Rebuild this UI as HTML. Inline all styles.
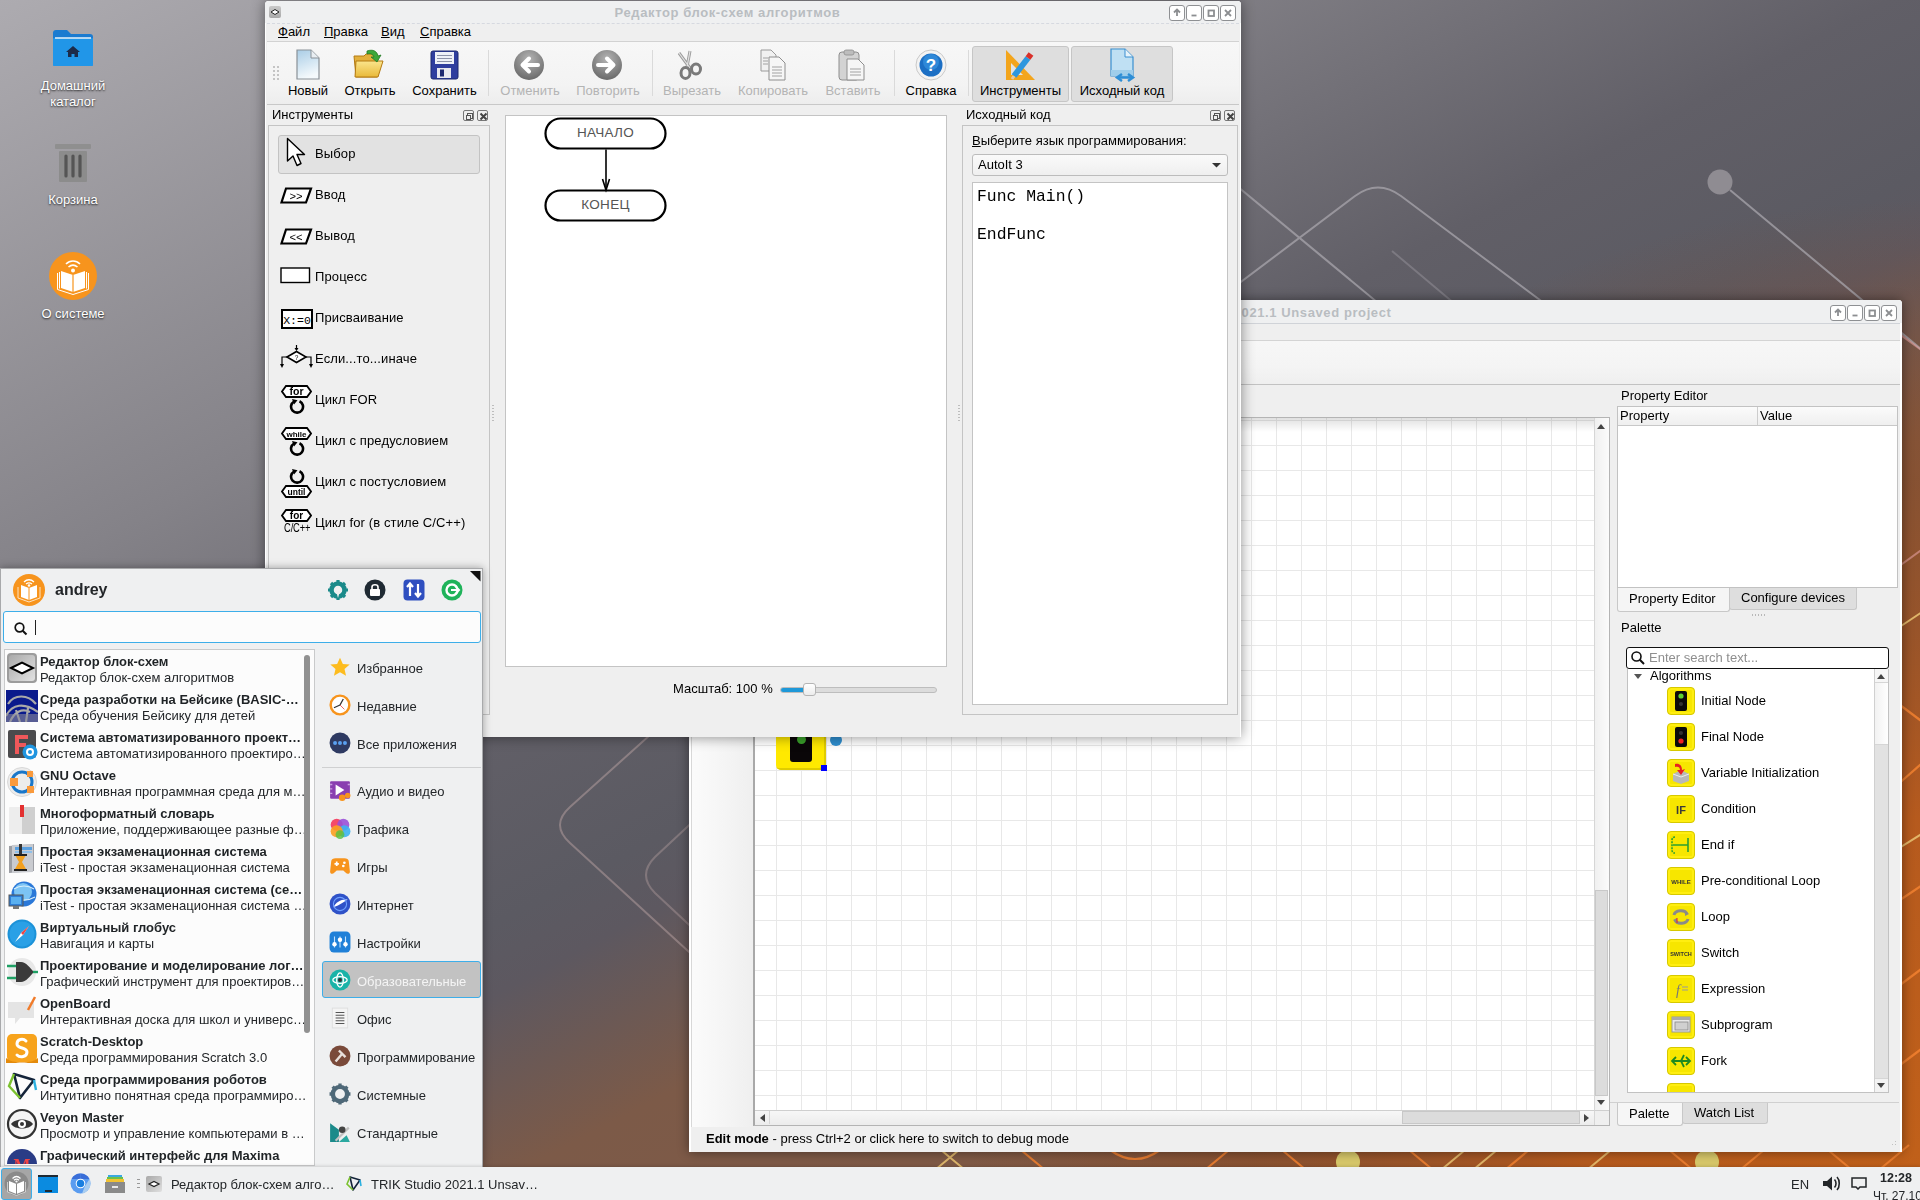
<!DOCTYPE html>
<html><head><meta charset="utf-8">
<style>
*{box-sizing:border-box;margin:0;padding:0}
html,body{width:1920px;height:1200px;overflow:hidden}
body{position:relative;font-family:"Liberation Sans",sans-serif;font-size:13px;color:#000;
background:linear-gradient(172deg,#85838a 0%,#7c7a80 30%,#6a676d 52%,#6d5f5d 65%,#7a5a48 80%,#9a5428 100%)}
.abs{position:absolute}
svg{display:block}
#bg{position:absolute;left:0;top:0;width:1920px;height:1200px}
.dicon{position:absolute;width:110px;text-align:center;color:#fff;font-size:13px;line-height:16px;text-shadow:0 1px 2px rgba(0,0,0,.8)}
.win{position:absolute;background:#efefef;box-shadow:0 0 14px rgba(0,0,0,.45);border-radius:4px 4px 0 0}
.title{position:absolute;left:0;top:0;right:0;height:23px;background:#eff0f1;border-radius:4px 4px 0 0}
.ttext{position:absolute;top:4px;left:0;right:0;text-align:center;font-weight:bold;color:#b9bdc1;font-size:13px}
.tbtn{position:absolute;top:4px;width:16px;height:16px;border:1px solid #8e9093;border-radius:3px;background:#fff}
.menu{font-size:13px;line-height:16px}
.sep{top:49px;width:1px;height:46px;background:#dadada}
.chk{top:45px;height:56px;border:1px solid #c6c6c6;border-radius:3px;background:#dedede}
.tbl{top:82px;text-align:center;font-size:13px;line-height:16px}
.dis{color:#b4b4b4}
.dbtn{width:11px;height:11px;border:1px solid #777;border-radius:2px}
.yic{width:28px;height:28px;background:#f7e600;border:1px solid #d6c800;border-radius:4px;box-shadow:inset 0 0 0 2px #ffee10}
.mname{font-size:13px;font-weight:bold;line-height:16px;color:#1f2326;white-space:nowrap}
.mdesc{font-size:13px;line-height:16px;color:#232629;white-space:nowrap}
.mcat{font-size:13px;line-height:16px;color:#232629}
.tool{font-size:13px;line-height:16px;letter-spacing:0.12px}
#taskbar{position:absolute;left:0;top:1167px;width:1920px;height:33px;background:#eff0f1}
</style></head><body>
<svg id="bg" width="1920" height="1200" viewBox="0 0 1920 1200">
  <defs>
    <linearGradient id="bgv" x1="0" y1="0" x2="976" y2="1854" gradientUnits="userSpaceOnUse">
      <stop offset="0" stop-color="#adabb0"/>
      <stop offset="0.25" stop-color="#848288"/>
      <stop offset="0.42" stop-color="#615f67"/>
      <stop offset="0.50" stop-color="#5b5a62"/>
      <stop offset="0.53" stop-color="#5d5860"/>
      <stop offset="0.61" stop-color="#7c5a48"/>
      <stop offset="1" stop-color="#8a5a40"/>
    </linearGradient>
    <radialGradient id="tl" cx="0" cy="0" r="10" gradientUnits="userSpaceOnUse">
      <stop offset="0" stop-color="#c8c6cc" stop-opacity="0"/>
      <stop offset="1" stop-color="#c8c6cc" stop-opacity="0"/>
    </radialGradient>
    <radialGradient id="orng" cx="1920" cy="1150" r="950" gradientUnits="userSpaceOnUse">
      <stop offset="0" stop-color="#c0601a" stop-opacity="1"/>
      <stop offset="0.35" stop-color="#b85a1c" stop-opacity="0.95"/>
      <stop offset="0.7" stop-color="#8e4c24" stop-opacity="0.6"/>
      <stop offset="1" stop-color="#8a4a28" stop-opacity="0"/>
    </radialGradient>
  </defs>
  <rect width="1920" height="1200" fill="url(#bgv)"/>
  <rect width="1920" height="1200" fill="url(#tl)"/>
  <rect width="1920" height="1200" fill="url(#orng)"/>
  <g fill="none" stroke="#a9a6ad" stroke-width="2" opacity="0.75">
    <path d="M1100 388 L1355 196 Q1378 179 1401 196 L1700 420"/>
    <path d="M1150 114 L1500 404"/>
    <path d="M1392 251 L1600 426" opacity="0.5"/>
    <path d="M1730 190 L1970 390"/>
  </g>
  <g fill="none" stroke="#b9a2a2" stroke-width="2" opacity="0.5">
    <path d="M700 690 L570 807 Q550 825 570 843 L700 962"/>
    <path d="M700 815 L655 857 Q637 875 655 893 L700 935" opacity="0.8"/>
  </g>
  <circle cx="1720" cy="182" r="12.5" fill="#8f8c92"/>
  <g fill="none" stroke="#e4a0a0" stroke-width="2" opacity="0.6">
    <path d="M1880 320 L1990 400"/>
    <path d="M1880 580 L1990 500"/>
  </g>
  <g fill="none" stroke="#f08030" stroke-width="2.2" opacity="0.9">
    <path d="M1880 690 L1960 750"/>
    <path d="M1880 800 L1960 730"/>
    <path d="M1900 900 L1960 860"/>
    <path d="M1880 1000 L1960 940"/>
    <path d="M1880 1080 L1960 1020"/>
    <path d="M1015 1145 L1045 1170"/>
    <path d="M1110 1150 Q1135 1168 1160 1150"/>
    <path d="M1235 1145 L1205 1170"/>
    <path d="M1276 1145 L1306 1170"/>
    <path d="M1403 1145 L1433 1170"/>
    <path d="M1535 1145 L1505 1170"/>
    <path d="M1663 1145 L1693 1170"/>
    <path d="M1770 1145 L1740 1170"/>
    <path d="M1822 1145 L1852 1170"/>
    <path d="M1909 1145 L1879 1170"/>
  </g>
  <g fill="none" stroke="#e8c070" stroke-width="2" opacity="0.9">
    <path d="M935 1145 L965 1170 M965 1145 L935 1170"/>
    <path d="M1471 1145 L1441 1170"/>
    <path d="M1503 1145 L1473 1170"/>
    <path d="M1617 1145 L1587 1170"/>
    <path d="M1880 640 L1940 600"/>
    <path d="M1880 860 L1960 810"/>
  </g>
  <circle cx="1348" cy="1162" r="12" fill="#d8c86a"/>
  <circle cx="1707" cy="1162" r="12" fill="#d8c86a"/>
</svg>
<svg class="abs" style="left:52px;top:29px" width="42" height="38">
  <path d="M1 4Q1 1 4 1H15L19 5H38Q41 5 41 8V35Q41 37 39 37H3Q1 37 1 35Z" fill="#1b7bd0"/>
  <rect x="1" y="9" width="40" height="28" rx="1" fill="#2196e8"/>
  <path d="M3 9H39" stroke="#e8f2fa" stroke-width="1.5"/>
  <path d="M21 17L14 23H16V28H19.5V25H22.5V28H26V23H28Z" fill="#1c2b4a"/>
</svg>
<div class="dicon" style="left:18px;top:78px">Домашний<br>каталог</div>
<svg class="abs" style="left:55px;top:143px" width="36" height="40">
  <rect x="0" y="1" width="36" height="5" rx="1" fill="#8f8f8f"/>
  <rect x="4" y="8" width="28" height="31" rx="1" fill="#8c8c8c"/>
  <path d="M11 13V33M18 13V33M25 13V33" stroke="#555" stroke-width="3.2" stroke-linecap="round"/>
</svg>
<div class="dicon" style="left:18px;top:192px">Корзина</div>
<svg class="abs" style="left:49px;top:252px" width="48" height="48">
  <circle cx="24" cy="24" r="24" fill="#f7941d"/>
  <path d="M12 19L24 23L36 19V36L24 40L12 36Z" fill="#fff"/>
  <path d="M24 23V40" stroke="#f7941d" stroke-width="1.2"/>
  <path d="M8.5 21V37.5L24 42.5L39.5 37.5V21" fill="none" stroke="#fff" stroke-width="1"/>
  <path d="M10.5 20V36.5M37.5 20V36.5" stroke="#fff" stroke-width="1"/>
  <path d="M17 12C21 8 27 8 31 12M19.5 15C22.5 12.5 25.5 12.5 28.5 15" stroke="#fff" stroke-width="1.6" fill="none"/>
  <circle cx="24" cy="18.5" r="2" fill="#fff"/>
</svg>
<div class="dicon" style="left:18px;top:306px">О системе</div>
<div class="win" id="trik" style="left:689px;top:300px;width:1213px;height:852px;box-shadow:inset 2px 1px 0 #fff,inset -2px 0 0 #fff,0 0 12px rgba(0,0,0,.45)">
  <div class="title" style="height:23px">
    <div class="ttext" style="top:5px;left:20px;right:71px;letter-spacing:0.6px">TRIK Studio 2021.1 Unsaved project</div>
    <div class="tbtn" style="left:1141px;top:5px"><svg width="14" height="14"><path d="M7 3.5V10 M4 6.5L7 3.5L10 6.5" stroke="#8c8e91" stroke-width="1.8" fill="none"/></svg></div>
    <div class="tbtn" style="left:1158px;top:5px"><svg width="14" height="14"><path d="M4.5 9.5H9.5" stroke="#8c8e91" stroke-width="1.8"/></svg></div>
    <div class="tbtn" style="left:1175px;top:5px"><svg width="14" height="14"><rect x="4.5" y="4.5" width="5.5" height="5.5" stroke="#8c8e91" stroke-width="1.8" fill="none"/></svg></div>
    <div class="tbtn" style="left:1192px;top:5px"><svg width="14" height="14"><path d="M4 4L10 10M10 4L4 10" stroke="#8c8e91" stroke-width="1.8"/></svg></div>
  </div>
  <div class="abs" style="left:2px;top:23px;right:2px;height:18px;background:#efefef;border-top:1px solid #d0d3d8;border-bottom:1px solid #d4d4d4"></div>
  <div class="abs" style="left:2px;top:41px;right:2px;height:44px;background:linear-gradient(#f7f7f7,#f4f4f4 60%,#efefef);border-bottom:1px solid #c2c2c2"></div>
  <!-- left column -->
  <div class="abs" style="left:2px;top:118px;width:62px;height:709px;background:linear-gradient(90deg,#fbfbfb,#f4f4f4 60%,#efefef);border-left:1px solid #d8d8d8"></div>
  <!-- canvas frame -->
  <div class="abs" style="left:64px;top:117px;width:857px;height:709px;border:1px solid #b4b4b4;border-left:2px solid #a9a9a9"></div>
  <div class="abs" style="left:66px;top:118px;width:839px;height:692px;background-color:#fff;
     background-image:linear-gradient(90deg,#e8e8e8 1px,transparent 1px),linear-gradient(#e8e8e8 1px,transparent 1px);
     background-size:25px 25px;background-position:21px 27px"></div>
  <!-- shadow from flowchart window onto canvas -->
  <div class="abs" style="left:66px;top:118px;width:839px;height:14px;background:linear-gradient(rgba(0,0,0,.12),rgba(0,0,0,0))"></div>
  <!-- yellow node -->
  <div class="abs" style="left:87px;top:420px;width:50px;height:50px;background:#ffe900;border-radius:5px;box-shadow:inset -2px -2px 0 #e0cc00"></div>
  <div class="abs" style="left:101px;top:420px;width:22px;height:42px;background:#0a0608;border-radius:3px"></div>
  <div class="abs" style="left:108px;top:435px;width:9px;height:9px;background:#3aa02a;border-radius:50%"></div>
  <div class="abs" style="left:141px;top:434px;width:12px;height:12px;background:#2f8fd0;border-radius:50%"></div>
  <div class="abs" style="left:132px;top:465px;width:6px;height:6px;background:#0000ff"></div>
  <!-- v scrollbar -->
  <div class="abs" style="left:905px;top:118px;width:15px;height:692px;background:linear-gradient(90deg,#f0f0f0,#fbfbfb);border-left:1px solid #d6d6d6"></div>
  <svg class="abs" style="left:907px;top:123px" width="10" height="8"><path d="M1 6H9L5 1Z" fill="#444"/></svg>
  <div class="abs" style="left:906px;top:590px;width:13px;height:206px;background:#dcdcdc;border:1px solid #c8c8c8"></div>
  <svg class="abs" style="left:907px;top:799px" width="10" height="8"><path d="M1 1H9L5 6Z" fill="#444"/></svg>
  <!-- h scrollbar -->
  <div class="abs" style="left:66px;top:810px;width:839px;height:15px;background:linear-gradient(#f7f7f7,#ececec);border-top:1px solid #cfcfcf"></div>
  <svg class="abs" style="left:70px;top:813px" width="8" height="10"><path d="M6 1V9L1 5Z" fill="#444"/></svg>
  <div class="abs" style="left:80px;top:811px;width:1px;height:13px;background:#d6d6d6"></div>
  <div class="abs" style="left:713px;top:811px;width:178px;height:13px;background:#dcdcdc;border:1px solid #c8c8c8"></div>
  <svg class="abs" style="left:894px;top:813px" width="8" height="10"><path d="M1 1V9L6 5Z" fill="#444"/></svg>
  <div class="abs" style="left:905px;top:810px;width:15px;height:15px;background:#efefef;border-top:1px solid #cfcfcf;border-left:1px solid #d6d6d6"></div>
  <!-- status -->
  <div class="abs" style="left:17px;top:831px;font-size:13px;line-height:16px"><b>Edit mode</b> - press Ctrl+2 or click here to switch to debug mode</div>
  <!-- right dock -->
  <div class="abs" style="left:932px;top:88px;font-size:13px;line-height:16px">Property Editor</div>
  <div class="abs" style="left:928px;top:106px;width:281px;height:182px;background:#fff;border:1px solid #c2c2c2"></div>
  <div class="abs" style="left:929px;top:107px;width:279px;height:19px;background:linear-gradient(#fbfbfb,#efefef);border-bottom:1px solid #c8c8c8"></div>
  <div class="abs" style="left:1068px;top:107px;width:1px;height:18px;background:#cdcdcd"></div>
  <div class="abs" style="left:931px;top:108px;font-size:13px;line-height:16px">Property</div>
  <div class="abs" style="left:1071px;top:108px;font-size:13px;line-height:16px">Value</div>
  <div class="abs" style="left:928px;top:288px;width:113px;height:24px;background:#f5f5f5;border:1px solid #c8c8c8;border-top:none;border-radius:0 0 3px 3px"></div>
  <div class="abs" style="left:1040px;top:288px;width:128px;height:22px;background:#dedede;border:1px solid #c8c8c8;border-top:none;border-radius:0 0 3px 3px"></div>
  <div class="abs" style="left:940px;top:291px;font-size:13px;line-height:16px">Property Editor</div>
  <div class="abs" style="left:1052px;top:290px;font-size:13px;line-height:16px">Configure devices</div>
  <div class="abs" style="left:1062px;top:314px;width:16px;height:2px;background:radial-gradient(circle,#b8b8b8 0.6px,transparent 0.9px) 0 0/3px 2px"></div>
  <div class="abs" style="left:932px;top:320px;font-size:13px;line-height:16px">Palette</div>
  <div class="abs" style="left:937px;top:347px;width:263px;height:22px;background:#fff;border:1.5px solid #111;border-radius:3px"></div>
  <svg class="abs" style="left:941px;top:350px" width="16" height="16"><circle cx="6.5" cy="6.5" r="4.5" fill="none" stroke="#111" stroke-width="1.6"/><path d="M9.8 9.8L14 14" stroke="#111" stroke-width="2"/></svg>
  <div class="abs" style="left:960px;top:350px;font-size:13px;line-height:16px;color:#8f8f8f">Enter search text...</div>
  <div class="abs" style="left:938px;top:369px;width:262px;height:424px;background:#fff;border:1px solid #c2c2c2;border-top:none;overflow:hidden">
  </div>
  <svg class="abs" style="left:944px;top:373px" width="10" height="8"><path d="M1 1H9L5 6Z" fill="#555"/></svg>
  <div class="abs" style="left:961px;top:368px;font-size:13px;line-height:16px">Algorithms</div>
  <div class="abs" style="left:0;top:0;width:1212px;height:792px;overflow:hidden;pointer-events:none">
<div class="abs yic" style="left:978px;top:387px"></div>
<svg class="abs" style="left:978px;top:387px" width="28" height="28"><rect x="8" y="4" width="12" height="20" rx="2" fill="#0a0a0a"/><circle cx="14" cy="9" r="2.6" fill="#5cd030"/><circle cx="14" cy="17" r="2" fill="#333"/></svg>
<div class="abs" style="left:1012px;top:393px;font-size:13px;line-height:16px">Initial Node</div>
<div class="abs yic" style="left:978px;top:423px"></div>
<svg class="abs" style="left:978px;top:423px" width="28" height="28"><rect x="8" y="4" width="12" height="20" rx="2" fill="#0a0a0a"/><circle cx="14" cy="10" r="2" fill="#333"/><circle cx="14" cy="18" r="2.6" fill="#f02020"/></svg>
<div class="abs" style="left:1012px;top:429px;font-size:13px;line-height:16px">Final Node</div>
<div class="abs yic" style="left:978px;top:459px"></div>
<svg class="abs" style="left:978px;top:459px" width="28" height="28"><path d="M6 15L14 11L22 15V22L14 25L6 22Z" fill="#b8b8b8"/><path d="M6 15L14 18L22 15" fill="none" stroke="#eee" stroke-width="1"/><path d="M8 5C12 4 15 6 15 11L18 10L14 16L10 11L13 11C13 8 11 7 8 8Z" fill="#e82020"/></svg>
<div class="abs" style="left:1012px;top:465px;font-size:13px;line-height:16px">Variable Initialization</div>
<div class="abs yic" style="left:978px;top:495px"></div>
<svg class="abs" style="left:978px;top:495px" width="28" height="28"><text x="14" y="19" text-anchor="middle" font-family="Liberation Sans" font-weight="bold" font-size="11" fill="#3a3a3a">IF</text></svg>
<div class="abs" style="left:1012px;top:501px;font-size:13px;line-height:16px">Condition</div>
<div class="abs yic" style="left:978px;top:531px"></div>
<svg class="abs" style="left:978px;top:531px" width="28" height="28"><path d="M8 6C5 6 5 8 5 10V18C5 20 5 22 8 22" fill="none" stroke="#2aa030" stroke-width="1.6" stroke-dasharray="2 1"/><path d="M6 14H21M21 7V21" stroke="#2aa030" stroke-width="1.6"/></svg>
<div class="abs" style="left:1012px;top:537px;font-size:13px;line-height:16px">End if</div>
<div class="abs yic" style="left:978px;top:567px"></div>
<svg class="abs" style="left:978px;top:567px" width="28" height="28"><text x="14" y="17" text-anchor="middle" font-family="Liberation Sans" font-weight="bold" font-size="6" fill="#333">WHILE</text></svg>
<div class="abs" style="left:1012px;top:573px;font-size:13px;line-height:16px">Pre-conditional Loop</div>
<div class="abs yic" style="left:978px;top:603px"></div>
<svg class="abs" style="left:978px;top:603px" width="28" height="28"><path d="M7 12C8 7 18 6 20 11M21 16C20 21 10 22 8 17" fill="none" stroke="#8a8a8a" stroke-width="3"/><path d="M18 8L22 11L18 13Z M10 15L6 17L10 20Z" fill="#8a8a8a"/><path d="M10 15V20" stroke="#e22" stroke-width="1"/></svg>
<div class="abs" style="left:1012px;top:609px;font-size:13px;line-height:16px">Loop</div>
<div class="abs yic" style="left:978px;top:639px"></div>
<svg class="abs" style="left:978px;top:639px" width="28" height="28"><text x="14" y="17" text-anchor="middle" font-family="Liberation Sans" font-weight="bold" font-size="5.5" fill="#333">SWITCH</text></svg>
<div class="abs" style="left:1012px;top:645px;font-size:13px;line-height:16px">Switch</div>
<div class="abs yic" style="left:978px;top:675px"></div>
<svg class="abs" style="left:978px;top:675px" width="28" height="28"><text x="11" y="20" text-anchor="middle" font-family="Liberation Serif" font-style="italic" font-size="14" fill="#777">f</text><path d="M15 12H21M15 15H21" stroke="#999" stroke-width="1.2"/></svg>
<div class="abs" style="left:1012px;top:681px;font-size:13px;line-height:16px">Expression</div>
<div class="abs yic" style="left:978px;top:711px"></div>
<svg class="abs" style="left:978px;top:711px" width="28" height="28"><rect x="5" y="6" width="18" height="15" fill="#e8e8e8" stroke="#999" stroke-width="1"/><rect x="5" y="6" width="18" height="3" fill="#aaa"/><rect x="8" y="11" width="13" height="8" fill="#d0d0d0" stroke="#888" stroke-width="0.8"/></svg>
<div class="abs" style="left:1012px;top:717px;font-size:13px;line-height:16px">Subprogram</div>
<div class="abs yic" style="left:978px;top:747px"></div>
<svg class="abs" style="left:978px;top:747px" width="28" height="28"><path d="M5 14H23M9 10L5 14L9 18M19 10L23 14L19 18M14 14L17 8M14 14L17 20" fill="none" stroke="#1f8a1f" stroke-width="1.8"/></svg>
<div class="abs" style="left:1012px;top:753px;font-size:13px;line-height:16px">Fork</div>
<div class="abs yic" style="left:978px;top:783px"></div>
<svg class="abs" style="left:978px;top:783px" width="28" height="28"><path d="M6 14H22" stroke="#1f8a1f" stroke-width="1.8"/></svg>
  </div>
  <!-- palette scrollbar -->
  <div class="abs" style="left:1185px;top:369px;width:14px;height:423px;background:#e2e2e2;border-left:1px solid #d0d0d0"></div>
  <div class="abs" style="left:1186px;top:369px;width:13px;height:14px;background:#f6f6f6;border-bottom:1px solid #d6d6d6"></div>
  <svg class="abs" style="left:1187px;top:373px" width="10" height="8"><path d="M1 6H9L5 1Z" fill="#444"/></svg>
  <div class="abs" style="left:1186px;top:383px;width:13px;height:62px;background:linear-gradient(90deg,#f2f2f2,#fff);border-bottom:1px solid #d6d6d6"></div>
  <div class="abs" style="left:1186px;top:778px;width:13px;height:14px;background:#f3f3f3;border-top:1px solid #d6d6d6"></div>
  <svg class="abs" style="left:1187px;top:782px" width="10" height="8"><path d="M1 1H9L5 6Z" fill="#444"/></svg>
  <!-- palette tabs -->
  <div class="abs" style="left:928px;top:802px;width:66px;height:24px;background:#f6f6f6;border:1px solid #c8c8c8;border-top:none;border-radius:0 0 3px 3px"></div>
  <div class="abs" style="left:993px;top:802px;width:86px;height:22px;background:#dedede;border:1px solid #c8c8c8;border-top:none;border-radius:0 0 3px 3px"></div>
  <div class="abs" style="left:940px;top:806px;font-size:13px;line-height:16px">Palette</div>
  <div class="abs" style="left:1005px;top:805px;font-size:13px;line-height:16px">Watch List</div>
  <div class="abs" style="left:921px;top:802px;width:289px;height:1px;background:#d0d0d0"></div>
  <div class="abs" style="left:1199px;top:837px;width:10px;height:10px;background:radial-gradient(circle,#c0c0c0 0.7px,transparent 1px) 0 0/3px 3px;clip-path:polygon(100% 0,100% 100%,0 100%)"></div>
</div>
<!-- Flowchart window -->
<div class="win" id="fc" style="left:265px;top:1px;width:976px;height:736px;box-shadow:inset 1px 1px 0 #fff,inset -1px 0 0 #fff,0 0 14px rgba(0,0,0,.45)">
  <div class="title" style="height:22px">
    <div class="abs" style="left:4px;top:5px;width:12px;height:12px;border-radius:2px;background:linear-gradient(#c9c9c9,#a9a9a9)">
      <svg width="12" height="12" style="position:absolute;left:0;top:0"><path d="M2 6 L6 3.5 L10 6 L6 8.5Z" fill="#fff" stroke="#222" stroke-width="1"/></svg>
    </div>
    <div class="ttext" style="top:4px;left:20px;right:71px;letter-spacing:0.6px">Редактор блок-схем алгоритмов</div>
    <div class="tbtn" style="left:904px"><svg width="14" height="14"><path d="M7 3.5V10 M4 6.5L7 3.5L10 6.5" stroke="#8c8e91" stroke-width="1.8" fill="none"/></svg></div>
    <div class="tbtn" style="left:921px"><svg width="14" height="14"><path d="M4.5 9.5H9.5" stroke="#8c8e91" stroke-width="1.8"/></svg></div>
    <div class="tbtn" style="left:938px"><svg width="14" height="14"><rect x="4.5" y="4.5" width="5.5" height="5.5" stroke="#8c8e91" stroke-width="1.8" fill="none"/></svg></div>
    <div class="tbtn" style="left:955px"><svg width="14" height="14"><path d="M4 4L10 10M10 4L4 10" stroke="#8c8e91" stroke-width="1.8"/></svg></div>
  </div>
  <!-- menu bar -->
  <div class="abs" style="left:2px;top:22px;right:2px;height:19px;background:#efefef;border-top:1px dashed #d6d9e0;border-bottom:1px solid #d2d2d2"></div>
  <div class="abs menu" style="left:13px;top:23px"><u>Ф</u>айл</div>
  <div class="abs menu" style="left:59px;top:23px"><u>П</u>равка</div>
  <div class="abs menu" style="left:116px;top:23px"><u>В</u>ид</div>
  <div class="abs menu" style="left:155px;top:23px"><u>С</u>правка</div>
  <!-- toolbar -->
  <div class="abs" style="left:2px;top:41px;right:2px;height:63px;background:linear-gradient(#f7f7f7,#f3f3f3 70%,#ededed);border-bottom:1px solid #c8c8c8"></div>
  <div class="abs" style="left:7px;top:64px;width:7px;height:17px;background:radial-gradient(circle,#c4c4c4 0.8px,transparent 1.1px) 0 0/4px 4px"></div>
  <div class="abs sep" style="left:223px"></div>
  <div class="abs sep" style="left:387px"></div>
  <div class="abs sep" style="left:629px"></div>
  <div class="abs sep" style="left:703px"></div>
  <div class="abs chk" style="left:707px;width:97px"></div>
  <div class="abs chk" style="left:806px;width:102px"></div>
  <div class="abs tbl" style="left:13px;width:60px">Новый</div>
  <div class="abs tbl" style="left:75px;width:60px">Открыть</div>
  <div class="abs tbl" style="left:142px;width:75px">Сохранить</div>
  <div class="abs tbl dis" style="left:230px;width:70px">Отменить</div>
  <div class="abs tbl dis" style="left:303px;width:80px">Повторить</div>
  <div class="abs tbl dis" style="left:392px;width:70px">Вырезать</div>
  <div class="abs tbl dis" style="left:468px;width:80px">Копировать</div>
  <div class="abs tbl dis" style="left:553px;width:70px">Вставить</div>
  <div class="abs tbl" style="left:631px;width:70px">Справка</div>
  <div class="abs tbl" style="left:707px;width:97px">Инструменты</div>
  <div class="abs tbl" style="left:806px;width:102px">Исходный код</div>
  
  <svg class="abs" style="left:27px;top:47px" width="32" height="34">
    <defs><linearGradient id="gnew" x1="0" y1="0" x2="0.3" y2="1"><stop offset="0" stop-color="#a9cde6"/><stop offset="1" stop-color="#f4f9fc"/></linearGradient></defs>
    <path d="M5 2H19L27 10V31H5Z" fill="url(#gnew)" stroke="#8a9197" stroke-width="1.2"/>
    <path d="M19 2V10H27" fill="#e9eef2" stroke="#8a9197" stroke-width="1"/>
  </svg>
  <svg class="abs" style="left:88px;top:47px" width="34" height="34">
    <defs><linearGradient id="gfold" x1="0" y1="0" x2="0" y2="1"><stop offset="0" stop-color="#fbe58c"/><stop offset="1" stop-color="#e9b93a"/></linearGradient></defs>
    <path d="M1 8H11L13 6H24V29H3Z" fill="#e3b03c" stroke="#b47a12" stroke-width="1"/>
    <path d="M3 13H30L25 29H2Z" fill="url(#gfold)" stroke="#b47a12" stroke-width="1"/>
    <path d="M14 3C20 1 24 3 25 8L28 7L24 14L18 9L21 9C20 6 17 5 14 6Z" fill="#3ca83a" stroke="#237a24" stroke-width="0.8"/>
  </svg>
  <svg class="abs" style="left:163px;top:48px" width="32" height="32">
    <rect x="3" y="2" width="27" height="28" rx="2" fill="#2f3e9e" stroke="#1d286e" stroke-width="1"/>
    <rect x="7" y="3" width="19" height="12" fill="#eef1f7"/>
    <path d="M9 6.5H24M9 9.5H24M9 12.5H24" stroke="#8d93a8" stroke-width="1"/>
    <rect x="9" y="19" width="14" height="10" fill="#e8e8ee"/>
    <rect x="12" y="20.5" width="4" height="7" fill="#1d286e"/>
  </svg>
  <svg class="abs" style="left:248px;top:48px" width="32" height="32">
    <defs><radialGradient id="garr" cx="0.5" cy="0.3" r="0.7"><stop offset="0" stop-color="#b4b4b4"/><stop offset="1" stop-color="#6a6a6a"/></radialGradient></defs>
    <circle cx="16" cy="16" r="15" fill="url(#garr)"/>
    <path d="M25 16H10M16 9.5L9.5 16L16 22.5" stroke="#fff" stroke-width="4" fill="none" stroke-linecap="round" stroke-linejoin="round"/>
  </svg>
  <svg class="abs" style="left:326px;top:48px" width="32" height="32">
    <circle cx="16" cy="16" r="15" fill="url(#garr)"/>
    <path d="M7 16H22M16 9.5L22.5 16L16 22.5" stroke="#fff" stroke-width="4" fill="none" stroke-linecap="round" stroke-linejoin="round"/>
  </svg>
  <svg class="abs" style="left:411px;top:48px" width="32" height="32">
    <path d="M3 4L14 19M14 2L11 18" stroke="#9b9b9b" stroke-width="3" fill="none"/>
    <path d="M3 4L14 19M14 2L11 18" stroke="#e2e2e2" stroke-width="1.2" fill="none"/>
    <ellipse cx="9.5" cy="24" rx="4.5" ry="5.5" fill="none" stroke="#7a7a7a" stroke-width="3"/>
    <ellipse cx="20" cy="20" rx="4.5" ry="5" fill="none" stroke="#7a7a7a" stroke-width="3"/>
  </svg>
  <svg class="abs" style="left:492px;top:48px" width="32" height="32">
    <path d="M4 1H14L19 6V22H4Z" fill="#f1f1f1" stroke="#9a9a9a" stroke-width="1"/>
    <path d="M12 8H22L28 14V31H12Z" fill="#f6f6f6" stroke="#8e8e8e" stroke-width="1"/>
    <path d="M6 9H11M6 12H11M6 15H11M15 18H25M15 21H25M15 24H25M15 27H25" stroke="#999" stroke-width="0.9"/>
  </svg>
  <svg class="abs" style="left:572px;top:48px" width="32" height="32">
    <rect x="2" y="3" width="20" height="28" rx="3" fill="#d3d3d3" stroke="#8e8e8e" stroke-width="1"/>
    <rect x="7" y="1" width="10" height="5" rx="2" fill="#bdbdbd" stroke="#8e8e8e" stroke-width="0.8"/>
    <path d="M10 10H21L27 16V31H10Z" fill="#f6f6f6" stroke="#8e8e8e" stroke-width="1"/>
    <path d="M13 20H24M13 23H24M13 26H24" stroke="#999" stroke-width="0.9"/>
  </svg>
  <svg class="abs" style="left:650px;top:48px" width="32" height="32">
    <circle cx="16" cy="16" r="15" fill="#f3f3f3" stroke="#c9c9c9" stroke-width="1"/>
    <circle cx="16" cy="16" r="11.5" fill="#1c6fc4"/>
    <circle cx="16" cy="13" r="8" fill="#3b9ae6" opacity="0.6"/>
    <text x="16" y="22" text-anchor="middle" font-family="Liberation Sans" font-weight="bold" font-size="17" fill="#fff">?</text>
  </svg>
  <svg class="abs" style="left:739px;top:48px" width="32" height="32">
    <path d="M2 1L2 31L31 31Z" fill="#f3a51c"/>
    <path d="M7 14L7 26L19 26Z" fill="#e3e3e3"/>
    <path d="M10 27L24 9" stroke="#2e97de" stroke-width="6"/>
    <path d="M24 9L27 5" stroke="#d9302a" stroke-width="6"/>
    <path d="M10 27L8 30" stroke="#e8c9a0" stroke-width="3"/>
  </svg>
  <svg class="abs" style="left:842px;top:47px" width="32" height="34">
    <path d="M4 1H18L26 9V28H4Z" fill="#bfe0f3" stroke="#3a8fd0" stroke-width="1.2"/>
    <path d="M18 1V9H26" fill="#e6f3fa" stroke="#3a8fd0" stroke-width="1"/>
    <path d="M4 22H26V28H4Z" fill="#9fcdea"/>
    <path d="M15 26L10 29.5L15 33M21 26L26 29.5L21 33" stroke="#2e8ed6" stroke-width="2.5" fill="none"/>
    <path d="M11 29.5H25" stroke="#2e8ed6" stroke-width="2.5"/>
  </svg>

  <!-- left dock -->
  <div class="abs" style="left:7px;top:106px;font-size:13px">Инструменты</div>
  <div class="abs dbtn" style="left:198px;top:109px"><svg width="11" height="11"><rect x="3.5" y="2.5" width="5" height="5" fill="none" stroke="#555" stroke-width="1"/><rect x="2.5" y="4.5" width="4" height="4" fill="#efefef" stroke="#555" stroke-width="1"/></svg></div>
  <div class="abs dbtn" style="left:212px;top:109px"><svg width="11" height="11"><path d="M2.5 2.5L8.5 8.5M8.5 2.5L2.5 8.5" stroke="#444" stroke-width="2"/></svg></div>
  <div class="abs" style="left:3px;top:124px;width:222px;height:590px;border:1px solid #c4c4c4"></div>
  <div class="abs" style="left:13px;top:134px;width:202px;height:39px;border:1px solid #c3c3c3;border-radius:3px;background:#e2e2e2"></div>
  <div class="abs tool" style="left:50px;top:145px">Выбор</div>
  <div class="abs tool" style="left:50px;top:186px">Ввод</div>
  <div class="abs tool" style="left:50px;top:227px">Вывод</div>
  <div class="abs tool" style="left:50px;top:268px">Процесс</div>
  <div class="abs tool" style="left:50px;top:309px">Присваивание</div>
  <div class="abs tool" style="left:50px;top:350px">Если...то...иначе</div>
  <div class="abs tool" style="left:50px;top:391px">Цикл FOR</div>
  <div class="abs tool" style="left:50px;top:432px">Цикл с предусловием</div>
  <div class="abs tool" style="left:50px;top:473px">Цикл с постусловием</div>
  <div class="abs tool" style="left:50px;top:514px">Цикл for (в стиле C/C++)</div>
  
  <svg class="abs" style="left:21px;top:136px" width="20" height="32"><path d="M1.5 1.5V24L7 19L11 28.5L15 26.5L11 17.5H18.5Z" fill="#fff" stroke="#000" stroke-width="1.4" stroke-linejoin="round"/></svg>
  <svg class="abs" style="left:15px;top:186px" width="33" height="17"><path d="M6 1.5H31L26 15.5H1.5Z" fill="#fff" stroke="#000" stroke-width="2.2"/><text x="16" y="12.5" text-anchor="middle" font-family="Liberation Mono" font-size="11" fill="#000">&gt;&gt;</text></svg>
  <svg class="abs" style="left:15px;top:227px" width="33" height="17"><path d="M6 1.5H31L26 15.5H1.5Z" fill="#fff" stroke="#000" stroke-width="2.2"/><text x="16" y="12.5" text-anchor="middle" font-family="Liberation Mono" font-size="11" fill="#000">&lt;&lt;</text></svg>
  <svg class="abs" style="left:15px;top:266px" width="31" height="17"><rect x="1" y="1" width="28.5" height="14.5" fill="#fff" stroke="#000" stroke-width="1.4"/></svg>
  <svg class="abs" style="left:16px;top:308px" width="32" height="20"><rect x="1" y="1" width="30" height="18" fill="#fff" stroke="#000" stroke-width="2"/><text x="16" y="14.5" text-anchor="middle" font-family="Liberation Mono" font-size="11.5" fill="#000">X:=0</text></svg>
  <svg class="abs" style="left:15px;top:344px" width="33" height="23"><path d="M16.5 0V5" stroke="#000" stroke-width="1.2"/><path d="M14.5 3L16.5 6L18.5 3Z" fill="#000"/><path d="M7 12L16.5 6.5L26 12L16.5 17.5Z" fill="#fff" stroke="#000" stroke-width="1.6"/><text x="16.5" y="15" text-anchor="middle" font-family="Liberation Sans" font-size="6.5">?</text><path d="M7 12H2V20M26 12H31V20" fill="none" stroke="#000" stroke-width="1.2"/><path d="M0 19L2 23L4 19ZM29 19L31 23L33 19Z" fill="#000"/></svg>
  <svg class="abs" style="left:16px;top:384px" width="31" height="13"><path d="M1 6.5 L5 1 H26 L30 6.5 L26 12 H5Z" fill="#fff" stroke="#000" stroke-width="1.8"/><text x="15.5" y="10" text-anchor="middle" font-family="Liberation Sans" font-weight="bold" font-size="10.5" fill="#000">for</text></svg>
  <svg class="abs" style="left:24px;top:397px" width="16" height="16"><path d="M5 3.5 A6 6 0 1 0 10.5 3.2" fill="none" stroke="#000" stroke-width="2.6"/><path d="M3 1L8.5 2.2L5 6.5Z" fill="#000"/></svg>
  <svg class="abs" style="left:16px;top:426px" width="31" height="13"><path d="M1 6.5 L5 1 H26 L30 6.5 L26 12 H5Z" fill="#fff" stroke="#000" stroke-width="1.8"/><text x="15.5" y="10" text-anchor="middle" font-family="Liberation Sans" font-weight="bold" font-size="8" fill="#000">while</text></svg>
  <svg class="abs" style="left:24px;top:439px" width="16" height="16"><path d="M5 3.5 A6 6 0 1 0 10.5 3.2" fill="none" stroke="#000" stroke-width="2.6"/><path d="M3 1L8.5 2.2L5 6.5Z" fill="#000"/></svg>
  <svg class="abs" style="left:24px;top:467px" width="16" height="16"><path d="M5 3.5 A6 6 0 1 0 10.5 3.2" fill="none" stroke="#000" stroke-width="2.6"/><path d="M3 1L8.5 2.2L5 6.5Z" fill="#000"/></svg>
  <svg class="abs" style="left:16px;top:484px" width="31" height="13"><path d="M1 6.5 L5 1 H26 L30 6.5 L26 12 H5Z" fill="#fff" stroke="#000" stroke-width="1.8"/><text x="15.5" y="10" text-anchor="middle" font-family="Liberation Sans" font-weight="bold" font-size="8.5" fill="#000">until</text></svg>
  <svg class="abs" style="left:16px;top:508px" width="31" height="13"><path d="M1 6.5 L5 1 H26 L30 6.5 L26 12 H5Z" fill="#fff" stroke="#000" stroke-width="1.8"/><text x="15.5" y="10" text-anchor="middle" font-family="Liberation Sans" font-weight="bold" font-size="10" fill="#000">for</text></svg>
  <div class="abs" style="left:14px;top:520px;width:36px;text-align:center;font-size:13px;line-height:14px;transform:scaleX(0.72);letter-spacing:-0.2px">C/C++</div>

  <div class="abs" style="left:227px;top:403px;width:2px;height:17px;background:radial-gradient(circle,#bdbdbd 0.6px,transparent 0.9px) 0 0/2px 3px"></div>
  <div class="abs" style="left:693px;top:403px;width:2px;height:17px;background:radial-gradient(circle,#bdbdbd 0.6px,transparent 0.9px) 0 0/2px 3px"></div>
  <!-- canvas -->
  <div class="abs" style="left:240px;top:114px;width:442px;height:552px;background:#fff;border:1px solid #c4c4c4"></div>
  <svg class="abs" style="left:240px;top:114px" width="442" height="120">
    <rect x="40.5" y="3.5" width="120" height="30" rx="15" fill="#fff" stroke="#000" stroke-width="2.2"/>
    <rect x="40.5" y="75.5" width="120" height="30" rx="15" fill="#fff" stroke="#000" stroke-width="2.2"/>
    <path d="M101 34.5V74" stroke="#000" stroke-width="1.6"/>
    <path d="M97.5 64L101 75L104.5 64" stroke="#000" stroke-width="1.6" fill="none"/>
  </svg>
  <div class="abs" style="left:280px;top:124px;width:121px;text-align:center;font-size:13.5px;color:#555;letter-spacing:0.3px">НАЧАЛО</div>
  <div class="abs" style="left:280px;top:196px;width:121px;text-align:center;font-size:13.5px;color:#555;letter-spacing:0.3px">КОНЕЦ</div>
  <!-- zoom slider -->
  <div class="abs" style="left:408px;top:680px;font-size:13px">Масштаб: 100 %</div>
  <div class="abs" style="left:515px;top:686px;width:157px;height:6px;border-radius:3px;background:#dcdcdc;border:1px solid #bdbdbd"></div>
  <div class="abs" style="left:516px;top:687px;width:24px;height:4px;border-radius:2px;background:#1e98d8"></div>
  <div class="abs" style="left:538px;top:682px;width:13px;height:13px;border-radius:3px;background:linear-gradient(#fff,#ececec);border:1px solid #b4b4b4"></div>
  <!-- right dock -->
  <div class="abs" style="left:701px;top:106px;font-size:13px">Исходный код</div>
  <div class="abs dbtn" style="left:945px;top:109px"><svg width="11" height="11"><rect x="3.5" y="2.5" width="5" height="5" fill="none" stroke="#555" stroke-width="1"/><rect x="2.5" y="4.5" width="4" height="4" fill="#efefef" stroke="#555" stroke-width="1"/></svg></div>
  <div class="abs dbtn" style="left:959px;top:109px"><svg width="11" height="11"><path d="M2.5 2.5L8.5 8.5M8.5 2.5L2.5 8.5" stroke="#444" stroke-width="2"/></svg></div>
  <div class="abs" style="left:697px;top:124px;width:276px;height:590px;border:1px solid #c4c4c4"></div>
  <div class="abs" style="left:707px;top:132px;font-size:13px"><u>В</u>ыберите язык программирования:</div>
  <div class="abs" style="left:707px;top:153px;width:256px;height:22px;border:1px solid #bcbcbc;border-radius:3px;background:linear-gradient(#fafafa,#efefef);font-size:13px;padding:2px 0 0 5px">AutoIt 3
    <svg class="abs" style="right:6px;top:8px" width="9" height="5"><path d="M0 0H9L4.5 4.5Z" fill="#333"/></svg></div>
  <div class="abs" style="left:707px;top:181px;width:256px;height:523px;border:1px solid #c4c4c4;background:#fff"></div>
  <div class="abs" style="left:712px;top:186px;font-family:'Liberation Mono',monospace;font-size:16.4px;line-height:19px;white-space:pre">Func Main()

EndFunc</div>
</div>
<div class="abs" id="menu" style="left:0;top:568px;width:483px;height:599px;background:#eff0f1;border:1px solid #a8a9ab;border-bottom:none;box-shadow:0 0 8px rgba(0,0,0,.35)">
<svg width="0" height="0" style="position:absolute"><defs><linearGradient id="gg1" x1="0" y1="0" x2="1" y2="1"><stop offset="0" stop-color="#a9a9a9"/><stop offset="1" stop-color="#e2e2e2"/></linearGradient></defs></svg>
<svg class="abs" style="left:11px;top:4px" width="34" height="34"><circle cx="17" cy="17" r="16" fill="#f7941d"/><path d="M9 12L17 15L25 12V24L17 27L9 24Z" fill="#fff"/><path d="M17 15V27" stroke="#f7941d" stroke-width="1"/><path d="M6 14V25L17 29L28 25V14" fill="none" stroke="#fde3c2" stroke-width="1"/><path d="M12 9C15 6 19 6 22 9M14 11C16 9.5 18 9.5 20 11" stroke="#fff" stroke-width="1.3" fill="none"/><circle cx="17" cy="12.5" r="1.3" fill="#fff"/></svg>
<div class="abs" style="left:54px;top:11px;font-size:16px;font-weight:bold;color:#232629;line-height:20px">andrey</div>
<svg class="abs" style="left:326px;top:10px" width="22" height="22"><circle cx="11" cy="11" r="6.5" fill="none" stroke="#1a8a8a" stroke-width="4.5"/><path d="M11 1V4M11 18V21M1 11H4M18 11H21M4 4L6 6M16 16L18 18M4 18L6 16M16 6L18 4" stroke="#1a8a8a" stroke-width="3.2"/><path d="M9 12L11 19L13 12" fill="#eee"/></svg>
<svg class="abs" style="left:363px;top:10px" width="22" height="22"><circle cx="11" cy="11" r="10.5" fill="#1f2a33"/><rect x="6" y="10" width="10" height="7" rx="1" fill="#fff"/><path d="M8 10V8C8 5 14 5 14 8V10" stroke="#fff" stroke-width="1.6" fill="none"/></svg>
<svg class="abs" style="left:402px;top:10px" width="22" height="22"><rect x="0.5" y="0.5" width="21" height="21" rx="4" fill="#2f4fc0"/><path d="M7 17V5M4 8L7 4.5L10 8M15 5V17M12 14L15 17.5L18 14" stroke="#fff" stroke-width="2.2" fill="none"/></svg>
<svg class="abs" style="left:440px;top:10px" width="22" height="22"><circle cx="11" cy="11" r="10.5" fill="#1fb35a"/><circle cx="11" cy="11" r="5.5" fill="none" stroke="#fff" stroke-width="2.4"/><path d="M11 11H20" stroke="#1fb35a" stroke-width="3"/><path d="M10 11H18M15 8L18 11L15 14" stroke="#fff" stroke-width="2" fill="none"/></svg>
<svg class="abs" style="left:469px;top:2px" width="11" height="11"><path d="M0 0H10.5V10.5Z" fill="#111"/></svg>
<div class="abs" style="left:2px;top:42px;width:478px;height:32px;background:#fcfcfc;border:1px solid #3daee9;border-radius:3px"></div>
<svg class="abs" style="left:12px;top:52px" width="16" height="16"><circle cx="6.5" cy="6.5" r="4.3" fill="none" stroke="#111" stroke-width="1.7"/><path d="M9.7 9.7L13.5 13.5" stroke="#111" stroke-width="2"/></svg>
<div class="abs" style="left:34px;top:51px;width:1px;height:15px;background:#222"></div>
<div class="abs" style="left:3px;top:80px;width:311px;height:517px;background:#fcfcfc;border:1px solid #c9cacb;overflow:hidden">
</div>
<div class="abs" style="left:0;top:80px;width:315px;height:515px;overflow:hidden">
<div class="abs" style="left:0;top:-80px;width:315px;height:700px">
<svg class="abs" style="left:5px;top:83px" width="32" height="32"><rect x="1" y="1" width="30" height="30" rx="4" fill="#9c9c9c"/><rect x="3" y="3" width="26" height="26" rx="3" fill="url(#gg1)"/><path d="M5 16L16 10.5L27 16L16 21.5Z" fill="#fff" stroke="#000" stroke-width="2"/></svg>
<div class="abs mname" style="left:39px;top:85px">Редактор блок-схем</div>
<div class="abs mdesc" style="left:39px;top:101px">Редактор блок-схем алгоритмов</div>
<svg class="abs" style="left:5px;top:121px" width="32" height="32"><rect x="0" y="0" width="32" height="32" fill="#0a1a8c"/><path d="M2 14C8 4 22 4 30 14M0 26C6 14 18 12 32 22M4 32C8 22 16 18 24 22M10 20L14 32M22 18L20 32" stroke="#a9a9a9" stroke-width="2.2" fill="none"/><path d="M0 24L32 24V32H0Z" fill="#8a8a9a" opacity="0.6"/></svg>
<div class="abs mname" style="left:39px;top:123px">Среда разработки на Бейсике (BASIC-…</div>
<div class="abs mdesc" style="left:39px;top:139px">Среда обучения Бейсику для детей</div>
<svg class="abs" style="left:5px;top:159px" width="32" height="32"><rect x="2" y="2" width="28" height="28" rx="2" fill="#4b4b4d"/><path d="M9 7H22V11H13V15H20V19H13V26H9Z" fill="#f0585a"/><circle cx="24" cy="24" r="7.5" fill="#1f95e0"/><circle cx="24" cy="24" r="3" fill="none" stroke="#fff" stroke-width="2"/></svg>
<div class="abs mname" style="left:39px;top:161px">Система автоматизированного проект…</div>
<div class="abs mdesc" style="left:39px;top:177px">Система автоматизированного проектиро…</div>
<svg class="abs" style="left:5px;top:197px" width="32" height="32"><circle cx="16" cy="16" r="14.5" fill="#ececec" stroke="#d8d8d8" stroke-width="1"/><circle cx="16" cy="16" r="10" fill="none" stroke="#1a77c9" stroke-width="3"/><rect x="4" y="12" width="8" height="8" fill="#fa9a3c"/><rect x="21" y="5" width="6" height="6" fill="#fa9a3c"/><rect x="21" y="20" width="7" height="7" fill="#fa9a3c"/></svg>
<div class="abs mname" style="left:39px;top:199px">GNU Octave</div>
<div class="abs mdesc" style="left:39px;top:215px">Интерактивная программная среда для м…</div>
<svg class="abs" style="left:5px;top:235px" width="32" height="32"><rect x="3" y="3" width="26" height="27" rx="1" fill="#ededed"/><rect x="16" y="3" width="13" height="27" fill="#cfcfcf"/><rect x="14" y="1" width="4" height="12" fill="#e33030"/></svg>
<div class="abs mname" style="left:39px;top:237px">Многоформатный словарь</div>
<div class="abs mdesc" style="left:39px;top:253px">Приложение, поддерживающее разные ф…</div>
<svg class="abs" style="left:5px;top:273px" width="32" height="32"><path d="M3 4L28 2V29L3 31Z" fill="#9c9ea4"/><path d="M6 3L27 2V30L6 31Z" fill="#c9cbd0"/><rect x="9" y="5" width="17" height="3" fill="#5aa0e0"/><rect x="9" y="9" width="17" height="2" fill="#8fc0ea"/><rect x="13" y="2" width="3" height="12" fill="#333"/><path d="M9 13H20L16 20L20 27H9L13 20Z" fill="#f2a020"/><rect x="8" y="12" width="13" height="2" fill="#222"/><rect x="8" y="27" width="13" height="2" fill="#222"/></svg>
<div class="abs mname" style="left:39px;top:275px">Простая экзаменационная система</div>
<div class="abs mdesc" style="left:39px;top:291px">iTest - простая экзаменационная система</div>
<svg class="abs" style="left:5px;top:311px" width="32" height="32"><circle cx="18" cy="14" r="12.5" fill="#2a78d8"/><circle cx="17" cy="12" r="9" fill="#7cc4f4"/><path d="M8 9C14 5 22 5 28 9M7 17C14 21 22 21 29 17" stroke="#d8eefa" stroke-width="1.2" fill="none"/><rect x="3" y="15" width="14" height="11" fill="#2f7fd8" stroke="#555" stroke-width="1"/><rect x="5" y="17" width="10" height="7" fill="#5ab0f0"/><rect x="7" y="26" width="6" height="3" fill="#777"/></svg>
<div class="abs mname" style="left:39px;top:313px">Простая экзаменационная система (се…</div>
<div class="abs mdesc" style="left:39px;top:329px">iTest - простая экзаменационная система …</div>
<svg class="abs" style="left:5px;top:349px" width="32" height="32"><circle cx="16" cy="16" r="14.5" fill="#1c92d8"/><circle cx="16" cy="16" r="12.5" fill="#2aa0e6"/><path d="M23 8L17 17L9 24L15 15Z" fill="#fff"/><path d="M23 8L17 17L15 15Z" fill="#e44"/></svg>
<div class="abs mname" style="left:39px;top:351px">Виртуальный глобус</div>
<div class="abs mdesc" style="left:39px;top:367px">Навигация и карты</div>
<svg class="abs" style="left:5px;top:387px" width="32" height="32"><circle cx="16" cy="16" r="14" fill="#e8e8e8"/><path d="M1 10H12M1 22H12" stroke="#1ea064" stroke-width="2.4"/><path d="M10 6H15C20 6 24 12 28 16C24 20 20 26 15 26H10Z" fill="#3a3a3a"/><path d="M27 16H32" stroke="#1ea064" stroke-width="2.4"/></svg>
<div class="abs mname" style="left:39px;top:389px">Проектирование и моделирование лог…</div>
<div class="abs mdesc" style="left:39px;top:405px">Графический инструмент для проектиров…</div>
<svg class="abs" style="left:5px;top:425px" width="32" height="32"><path d="M2 8H28V24H14L9 30V24H2Z" fill="#e4e4e4"/><path d="M22 16L29 3" stroke="#f07b2a" stroke-width="2.5"/></svg>
<div class="abs mname" style="left:39px;top:427px">OpenBoard</div>
<div class="abs mdesc" style="left:39px;top:443px">Интерактивная доска для школ и универс…</div>
<svg class="abs" style="left:5px;top:463px" width="32" height="32"><rect x="1" y="2" width="30" height="28" rx="5" fill="#f7a31c"/><path d="M0 26C6 32 26 32 32 26V31H0Z" fill="#e38a0c"/><path d="M20 9C17 6 11 7 11 12C11 17 21 15 21 20C21 25 14 26 11 23" stroke="#fff" stroke-width="3" fill="none" stroke-linecap="round"/></svg>
<div class="abs mname" style="left:39px;top:465px">Scratch-Desktop</div>
<div class="abs mdesc" style="left:39px;top:481px">Среда программирования Scratch 3.0</div>
<svg class="abs" style="left:5px;top:501px" width="32" height="32"><path d="M8 4L28 10L14 28Z" fill="none" stroke="#14243a" stroke-width="2.6" stroke-linejoin="round"/><path d="M8 4L3 16L14 28" fill="none" stroke="#7cc230" stroke-width="2.4"/><path d="M28 10L30 20" stroke="#2bb0e0" stroke-width="2.4"/></svg>
<div class="abs mname" style="left:39px;top:503px">Среда программирования роботов</div>
<div class="abs mdesc" style="left:39px;top:519px">Интуитивно понятная среда программиро…</div>
<svg class="abs" style="left:5px;top:539px" width="32" height="32"><circle cx="16" cy="16" r="14" fill="#f4f4f4" stroke="#333" stroke-width="2.2"/><path d="M5 16C9 10 23 10 27 16C23 22 9 22 5 16Z" fill="#333"/><circle cx="16" cy="16" r="4" fill="#fff"/><circle cx="16" cy="16" r="2" fill="#333"/></svg>
<div class="abs mname" style="left:39px;top:541px">Veyon Master</div>
<div class="abs mdesc" style="left:39px;top:557px">Просмотр и управление компьютерами в …</div>
<svg class="abs" style="left:5px;top:577px" width="32" height="32"><circle cx="16" cy="18" r="15" fill="#2a3c86"/><text x="16" y="26" text-anchor="middle" font-family="Liberation Serif" font-size="18" fill="#e44" font-weight="bold">M</text></svg>
<div class="abs mname" style="left:39px;top:579px">Графический интерфейс для Maxima</div>

</div></div>
<div class="abs" style="left:303px;top:86px;width:6px;height:378px;border-radius:3px;background:#919191"></div>
<div class="abs" style="left:321px;top:198px;width:159px;height:1px;background:#cfd0d1"></div>
<div class="abs" style="left:321px;top:392px;width:159px;height:37px;background:#c2c2c2;border:1px solid #3daee9;border-radius:3px"></div>
<svg class="abs" style="left:328px;top:87px" width="22" height="22" viewBox="0 0 20 20"><path d="M10 1.5L12.6 7.2L18.8 7.8L14.1 11.9L15.5 18L10 14.8L4.5 18L5.9 11.9L1.2 7.8L7.4 7.2Z" fill="#fdbc1f"/></svg>
<div class="abs mcat" style="left:356px;top:92px;">Избранное</div>
<svg class="abs" style="left:328px;top:125px" width="22" height="22" viewBox="0 0 20 20"><circle cx="10" cy="10" r="8.5" fill="#fff" stroke="#f7941d" stroke-width="2.2"/><path d="M10 10L13 4.5M10 10L4.5 12.5" stroke="#333" stroke-width="1.2"/><path d="M10 10L14 14" stroke="#e55" stroke-width="0.8"/></svg>
<div class="abs mcat" style="left:356px;top:130px;">Недавние</div>
<svg class="abs" style="left:328px;top:163px" width="22" height="22" viewBox="0 0 20 20"><circle cx="10" cy="10" r="9.5" fill="#2e3a62"/><circle cx="5.5" cy="10" r="1.8" fill="#5aa0f0"/><circle cx="10" cy="10" r="1.8" fill="#5aa0f0"/><circle cx="14.5" cy="10" r="1.8" fill="#5aa0f0"/></svg>
<div class="abs mcat" style="left:356px;top:168px;">Все приложения</div>
<svg class="abs" style="left:328px;top:210px" width="22" height="22" viewBox="0 0 20 20"><rect x="1" y="2" width="18" height="16" rx="1" fill="#8a3fb0"/><path d="M6 5L14 10L6 15Z" fill="#fff"/><path d="M1 5H3M1 9H3M1 13H3M17 5H19" stroke="#c9a0e0" stroke-width="1.2"/><circle cx="12" cy="17" r="3" fill="#f7941d"/><circle cx="17" cy="15" r="2.5" fill="#f7941d"/></svg>
<div class="abs mcat" style="left:356px;top:215px;">Аудио и видео</div>
<svg class="abs" style="left:328px;top:248px" width="22" height="22" viewBox="0 0 20 20"><circle cx="7" cy="7" r="5.5" fill="#f44a6a"/><circle cx="13" cy="7" r="5.5" fill="#9a50d8" opacity="0.9"/><circle cx="14" cy="13" r="5.5" fill="#3cb2f0" opacity="0.9"/><circle cx="7" cy="13" r="5.5" fill="#fba020" opacity="0.9"/><circle cx="10" cy="16" r="4" fill="#54c040" opacity="0.8"/></svg>
<div class="abs mcat" style="left:356px;top:253px;">Графика</div>
<svg class="abs" style="left:328px;top:286px" width="22" height="22" viewBox="0 0 20 20"><path d="M2 6C2 4 4 3 6 3H14C16 3 18 4 18 6L19 15C19 17 17 18 15 16L13 14H7L5 16C3 18 1 17 1 15Z" fill="#f7941d"/><path d="M5 8H9M7 6V10" stroke="#fff" stroke-width="1.6"/><circle cx="14" cy="7" r="1.2" fill="#fff"/><circle cx="13" cy="10" r="1.2" fill="#fff"/></svg>
<div class="abs mcat" style="left:356px;top:291px;">Игры</div>
<svg class="abs" style="left:328px;top:324px" width="22" height="22" viewBox="0 0 20 20"><circle cx="10" cy="10" r="9.5" fill="#2f52c8"/><path d="M4 13C6 8 12 5 17 6C14 8 10 11 4 13Z" fill="#fff"/><circle cx="10" cy="10" r="6" fill="none" stroke="#6fa0ff" stroke-width="1"/></svg>
<div class="abs mcat" style="left:356px;top:329px;">Интернет</div>
<svg class="abs" style="left:328px;top:362px" width="22" height="22" viewBox="0 0 20 20"><rect x="0.5" y="0.5" width="19" height="19" rx="4" fill="#1f80d8"/><path d="M5 5V15M10 5V15M15 5V15" stroke="#bfe0ff" stroke-width="1"/><circle cx="5" cy="12" r="2" fill="#fff"/><circle cx="10" cy="8" r="2" fill="#fff"/><circle cx="15" cy="12" r="2" fill="#fff"/></svg>
<div class="abs mcat" style="left:356px;top:367px;">Настройки</div>
<svg class="abs" style="left:328px;top:400px" width="22" height="22" viewBox="0 0 20 20"><circle cx="10" cy="10" r="9.5" fill="#1ab3a8"/><ellipse cx="10" cy="10" rx="6.5" ry="3" fill="none" stroke="#fff" stroke-width="1.2"/><ellipse cx="10" cy="10" rx="3" ry="6.5" fill="none" stroke="#fff" stroke-width="1.2"/><circle cx="10" cy="10" r="1.8" fill="#333"/></svg>
<div class="abs mcat" style="left:356px;top:405px;color:#f4f4f4">Образовательные</div>
<svg class="abs" style="left:328px;top:438px" width="22" height="22" viewBox="0 0 20 20"><rect x="3" y="1" width="14" height="18" fill="#f4f4f4" stroke="#ddd" stroke-width="0.8"/><path d="M6 5H14M6 7.5H14M6 10H14M6 12.5H14M6 15H14" stroke="#555" stroke-width="1.1"/></svg>
<div class="abs mcat" style="left:356px;top:443px;">Офис</div>
<svg class="abs" style="left:328px;top:476px" width="22" height="22" viewBox="0 0 20 20"><circle cx="10" cy="10" r="9.5" fill="#7a4a3a"/><path d="M6 15L12 8M9 5L15 11" stroke="#e8e0dc" stroke-width="2.2"/></svg>
<div class="abs mcat" style="left:356px;top:481px;">Программирование</div>
<svg class="abs" style="left:328px;top:514px" width="22" height="22" viewBox="0 0 20 20"><circle cx="10" cy="10" r="6.5" fill="none" stroke="#4e6878" stroke-width="4"/><path d="M10 0.5V4M10 16V19.5M0.5 10H4M16 10H19.5M3.3 3.3L5.8 5.8M14.2 14.2L16.7 16.7M3.3 16.7L5.8 14.2M14.2 5.8L16.7 3.3" stroke="#4e6878" stroke-width="3"/></svg>
<div class="abs mcat" style="left:356px;top:519px;">Системные</div>
<svg class="abs" style="left:328px;top:552px" width="22" height="22" viewBox="0 0 20 20"><path d="M1 2L9 8V19H1Z" fill="#1a8a8a"/><path d="M6 18L18 6" stroke="#c0c0c0" stroke-width="2"/><circle cx="12" cy="8" r="3" fill="#444"/><path d="M9 19L19 19L16 13Z" fill="#2aa8a0"/></svg>
<div class="abs mcat" style="left:356px;top:557px;">Стандартные</div>

</div>
<div id="taskbar" style="box-shadow:0 -1px 3px rgba(0,0,0,.15)">
  <div class="abs" style="left:1px;top:1px;width:31px;height:32px;background:#a6a6a6;border:1px solid #3daee9;border-radius:3px"></div>
  <svg class="abs" style="left:4px;top:4px" width="25" height="25"><circle cx="12.5" cy="12.5" r="12" fill="#8a8a8a"/><path d="M5 10L12.5 13L20 10V20L12.5 23L5 20Z" fill="#fff"/><path d="M12.5 13V23" stroke="#8a8a8a" stroke-width="1"/><path d="M3.5 11V21L12.5 24.5L21.5 21V11" fill="none" stroke="#ddd" stroke-width="0.8"/><path d="M8.5 7.5C11 5 14 5 16.5 7.5M10 9.3C11.5 8 13.5 8 15 9.3" stroke="#fff" stroke-width="1.2" fill="none"/><circle cx="12.5" cy="10.5" r="1.1" fill="#fff"/></svg>
  <div class="abs" style="left:38px;top:8px;width:20px;height:18px;background:#0b8be0;border-top:2px solid #1f2a33"></div>
  <div class="abs" style="left:45px;top:23px;width:7px;height:2px;background:#1f2a33"></div>
  <svg class="abs" style="left:70px;top:6px" width="21" height="21"><circle cx="10.5" cy="10.5" r="10" fill="#5a9cf0"/><path d="M10.5 0.5A10 10 0 0 1 19.5 6H10.5Z" fill="#3a6ed8"/><path d="M1.5 6A10 10 0 0 1 10.5 0.5V6Z" fill="#3a6ed8"/><path d="M19.5 6A10 10 0 0 1 12 20.4L15 13Z" fill="#a9cdf0"/><circle cx="10.5" cy="10.5" r="4.8" fill="#fff"/><circle cx="10.5" cy="10.5" r="3.8" fill="#1a7fe0"/></svg>
  <div class="abs" style="left:108px;top:8px;width:14px;height:2px;background:#3aa8e0"></div>
  <div class="abs" style="left:107px;top:10px;width:16px;height:2px;background:#6cc04a"></div>
  <div class="abs" style="left:106px;top:12px;width:18px;height:3px;background:#f1c232"></div>
  <div class="abs" style="left:105px;top:15px;width:20px;height:11px;background:#8a8a8a"></div>
  <div class="abs" style="left:112px;top:19px;width:6px;height:2px;background:#e8e8e8"></div>
  <div class="abs" style="left:137px;top:12px;width:3px;height:10px;background:repeating-linear-gradient(#999 0 1px,transparent 1px 4px)"></div>
  <div class="abs" style="left:146px;top:9px;width:16px;height:16px;border-radius:2px;background:linear-gradient(135deg,#a8a8a8,#e0e0e0)"></div>
  <svg class="abs" style="left:146px;top:9px" width="16" height="16"><path d="M3 8L8 5.5L13 8L8 10.5Z" fill="#fff" stroke="#222" stroke-width="1.2"/></svg>
  <div class="abs" style="left:171px;top:10px;font-size:13px;line-height:16px;color:#232629">Редактор блок-схем алго…</div>
  <svg class="abs" style="left:346px;top:8px" width="16" height="17"><path d="M4 2L14 5L7 15Z" fill="none" stroke="#14243a" stroke-width="1.6" stroke-linejoin="round"/><path d="M4 2L1 9L7 15" fill="none" stroke="#7cc230" stroke-width="1.6"/><path d="M14 5L15 11" stroke="#2bb0e0" stroke-width="1.6"/></svg>
  <div class="abs" style="left:371px;top:10px;font-size:13px;line-height:16px;color:#232629">TRIK Studio 2021.1 Unsav…</div>
  <div class="abs" style="left:1791px;top:10px;font-size:13px;line-height:16px;color:#232629">EN</div>
  <svg class="abs" style="left:1822px;top:8px" width="19" height="17"><path d="M1 6H5L10 1.5V15.5L5 11H1Z" fill="#232629"/><path d="M12.5 4.5C14.5 6.5 14.5 10.5 12.5 12.5M15 2C18 5 18 12 15 15" stroke="#232629" stroke-width="1.6" fill="none"/></svg>
  <svg class="abs" style="left:1851px;top:10px" width="16" height="13"><path d="M1 1H15V10H9L7 12L5 10H1Z" fill="none" stroke="#232629" stroke-width="1.5"/></svg>
  <div class="abs" style="left:1880px;top:4px;font-size:12.5px;font-weight:bold;line-height:15px;color:#232629">12:28</div>
  <div class="abs" style="left:1873px;top:22px;font-size:12px;line-height:15px;color:#232629;white-space:nowrap">Чт, 27.10</div>
</div>
</body></html>
